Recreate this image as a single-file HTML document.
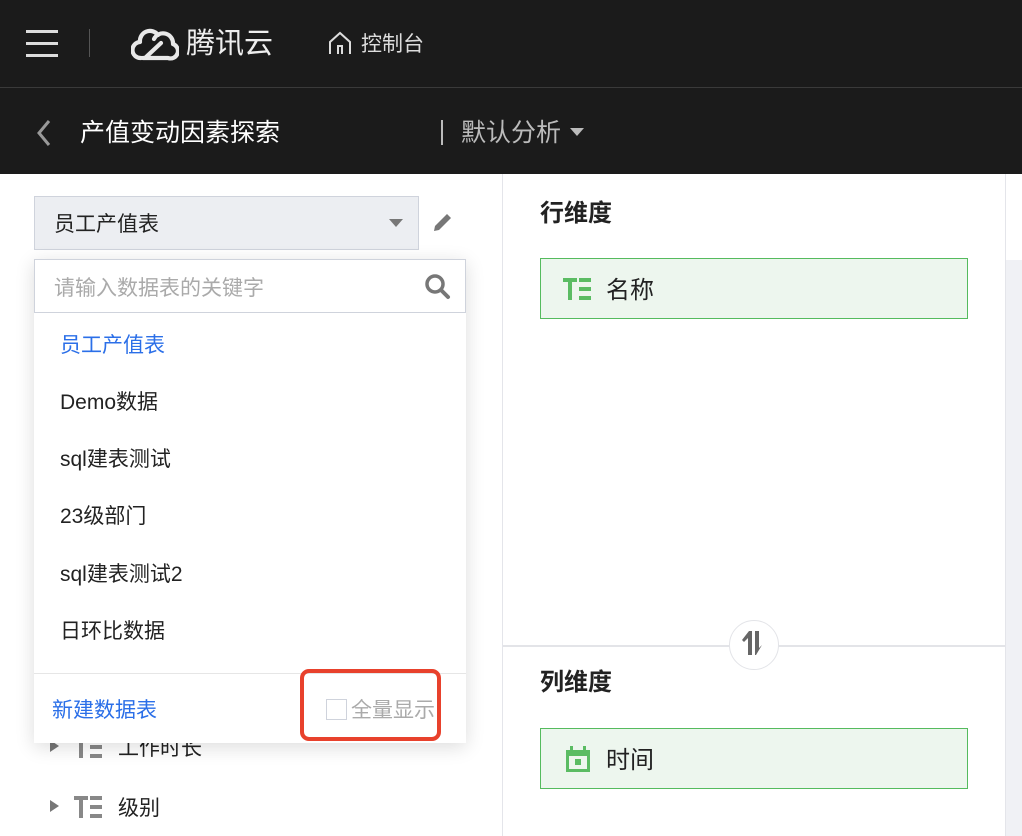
<!DOCTYPE html>
<html><head><meta charset="utf-8"><style>
*{margin:0;padding:0;box-sizing:border-box}
body{width:1022px;height:836px;overflow:hidden;background:#fff;font-family:"Liberation Sans","Noto Sans CJK SC",sans-serif;position:relative}
.a{position:absolute}
.top{left:0;top:0;width:1022px;height:87px;background:#1b1b1b}
.sub{left:0;top:87px;width:1022px;height:87px;background:#1b1b1b;border-top:1px solid #3a3a3a}
.t{white-space:nowrap;line-height:1.2;margin-top:3px}
.item{left:60px;font-size:21px;color:#222}
</style></head><body>
<div class="a top"></div>
<div class="a sub"></div>
<div class="a" style="left:26px;top:30px;width:32px;height:3px;background:#ddd"></div>
<div class="a" style="left:26px;top:42px;width:32px;height:3px;background:#ddd"></div>
<div class="a" style="left:26px;top:54px;width:32px;height:3px;background:#ddd"></div>
<div class="a" style="left:89px;top:29px;width:1px;height:28px;background:#555"></div>
<svg class="a" style="left:131px;top:24px" width="48" height="38" viewBox="0 0 48 38"><path d="M10 34 A8 8 0 0 1 9 18 A10 10 0 0 1 27 11 M23 15 A10 10 0 0 1 42 20 A7 7 0 0 1 37 34 H12 M14 34 L30 19" fill="none" stroke="#e8e8e8" stroke-width="4.2" stroke-linejoin="round" stroke-linecap="round"/></svg>
<div class="a t" style="left:186px;top:24px;font-size:29px;color:#eee">腾讯云</div>
<svg class="a" style="left:327px;top:30px" width="26" height="26" viewBox="0 0 26 26"><path d="M3 24 V12 L13 3 L23 12 V24 M11 24 V16 H15 V24" fill="none" stroke="#ddd" stroke-width="2"/></svg>
<div class="a t" style="left:361px;top:29px;font-size:21px;color:#ddd">控制台</div>
<svg class="a" style="left:34px;top:119px" width="18" height="28" viewBox="0 0 18 28"><path d="M15 2 L5 14 L15 26" fill="none" stroke="#999" stroke-width="3"/></svg>
<div class="a t" style="left:80px;top:115px;font-size:25px;color:#fff">产值变动因素探索</div>
<div class="a" style="left:441px;top:120px;width:2px;height:25px;background:#bbb"></div>
<div class="a t" style="left:461px;top:115px;font-size:25px;color:#bbb">默认分析</div>
<div class="a" style="left:570px;top:128px;width:0;height:0;border-left:7px solid transparent;border-right:7px solid transparent;border-top:8px solid #bbb"></div>

<div class="a" style="left:502px;top:174px;width:1px;height:662px;background:#e4e5ea"></div>
<div class="a" style="left:1005px;top:174px;width:1px;height:662px;background:#e4e5ea"></div>
<div class="a" style="left:1006px;top:260px;width:16px;height:576px;background:#f0f1f5"></div>

<div class="a" style="left:34px;top:196px;width:385px;height:54px;background:#eceef2;border:1px solid #cfd3dc"></div>
<div class="a t" style="left:54px;top:209px;font-size:21px;color:#222">员工产值表</div>
<div class="a" style="left:389px;top:219px;border-left:7px solid transparent;border-right:7px solid transparent;border-top:8px solid #777"></div>
<svg class="a" style="left:432px;top:211px" width="22" height="22" viewBox="0 0 22 22"><path d="M2 20 L3 15 L15 3 L19 7 L7 19 Z" fill="#777"/></svg>

<div class="a" style="left:50px;top:740px;border-top:6px solid transparent;border-bottom:6px solid transparent;border-left:9px solid #777"></div>
<svg class="a" style="left:74px;top:736px" width="28" height="22" viewBox="0 0 28 22"><path d="M0 0H14V4H9V22H5V4H0Z M16 0H28V4H16Z M16 9H28V13H16Z M16 18H28V22H16Z" fill="#888"/></svg>
<div class="a t" style="left:118px;top:733px;font-size:21px;color:#222">工作时长</div>
<div class="a" style="left:50px;top:800px;border-top:6px solid transparent;border-bottom:6px solid transparent;border-left:9px solid #777"></div>
<svg class="a" style="left:74px;top:796px" width="28" height="22" viewBox="0 0 28 22"><path d="M0 0H14V4H9V22H5V4H0Z M16 0H28V4H16Z M16 9H28V13H16Z M16 18H28V22H16Z" fill="#888"/></svg>
<div class="a t" style="left:118px;top:793px;font-size:21px;color:#222">级别</div>

<div class="a" style="left:34px;top:259px;width:432px;height:484px;background:#fff;box-shadow:0 4px 18px rgba(0,0,0,.14)"></div>
<div class="a" style="left:34px;top:259px;width:432px;height:54px;border:1px solid #cfd3dc;background:#fff"></div>
<div class="a t" style="left:54px;top:273px;font-size:21px;color:#aaa">请输入数据表的关键字</div>
<svg class="a" style="left:424px;top:273px" width="28" height="28" viewBox="0 0 28 28"><circle cx="11" cy="11" r="8" fill="none" stroke="#777" stroke-width="3.5"/><path d="M17 17 L24 24" stroke="#777" stroke-width="4" stroke-linecap="round"/></svg>
<div class="a t item" style="top:330px;color:#2b6fe8">员工产值表</div>
<div class="a t item" style="top:387px">Demo数据</div>
<div class="a t item" style="top:444px">sql建表测试</div>
<div class="a t item" style="top:501px">23级部门</div>
<div class="a t item" style="top:559px">sql建表测试2</div>
<div class="a t item" style="top:616px">日环比数据</div>
<div class="a" style="left:34px;top:673px;width:432px;height:1px;background:#e6e6e6"></div>
<div class="a t" style="left:52px;top:695px;font-size:21px;color:#2b6fe8">新建数据表</div>
<div class="a" style="left:326px;top:699px;width:21px;height:21px;border:1px solid #cfd3dc;background:#fff"></div>
<div class="a t" style="left:351px;top:695px;font-size:21px;color:#aaa;width:86px;overflow:hidden">全量显示</div>
<div class="a" style="left:300px;top:669px;width:141px;height:72px;border:4px solid #e8412c;border-radius:9px"></div>

<div class="a t" style="left:540px;top:197px;font-size:24px;color:#222;font-weight:bold">行维度</div>
<div class="a" style="left:540px;top:258px;width:428px;height:61px;background:#edf6ee;border:1px solid #55bb5e"></div>
<svg class="a" style="left:563px;top:278px" width="28" height="22" viewBox="0 0 28 22"><path d="M0 0H14V4H9V22H5V4H0Z M16 0H28V4H16Z M16 9H28V13H16Z M16 18H28V22H16Z" fill="#5bbc63"/></svg>
<div class="a t" style="left:606px;top:274px;font-size:24px;color:#222">名称</div>

<div class="a" style="left:503px;top:645px;width:502px;height:2px;background:#e3e4e8"></div>
<div class="a" style="left:729px;top:620px;width:50px;height:50px;border-radius:50%;background:#fff;border:1px solid #e3e4e8"></div>
<svg class="a" style="left:741px;top:630px" width="26" height="26" viewBox="0 0 26 26"><path d="M1 10 L8 1 H11 V25 H7 V8 L3 12 Z" fill="#666"/><path d="M14 1 H18 V18 L21 15 L15 25 H14 Z" fill="#666"/></svg>
<div class="a t" style="left:540px;top:666px;font-size:24px;color:#222;font-weight:bold">列维度</div>
<div class="a" style="left:540px;top:728px;width:428px;height:61px;background:#edf6ee;border:1px solid #55bb5e"></div>
<svg class="a" style="left:565px;top:746px" width="26" height="26" viewBox="0 0 26 26"><path d="M1 4H25V26H1Z" fill="#5bbc63"/><rect x="5" y="0" width="3" height="6" fill="#5bbc63"/><rect x="18" y="0" width="3" height="6" fill="#5bbc63"/><rect x="4" y="10" width="18" height="13" fill="#edf6ee"/><rect x="10" y="13" width="6" height="6" fill="#5bbc63"/></svg>
<div class="a t" style="left:606px;top:744px;font-size:24px;color:#222">时间</div>
</body></html>
